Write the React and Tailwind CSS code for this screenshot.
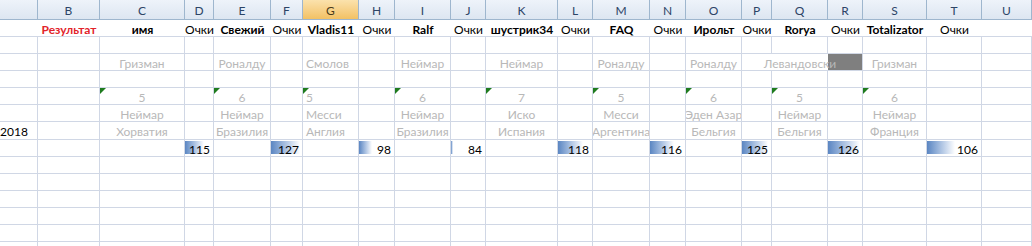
import React from 'react';

const letters = ['', 'B', 'C', 'D', 'E', 'F', 'G', 'H', 'I', 'J', 'K', 'L', 'M', 'N', 'O', 'P', 'Q', 'R', 'S', 'T', 'U'];

// one entry per participant: name column + "Очки" column
const players = [
    { name: 'имя', pick: 'Гризман', goals: '5', scorer: 'Неймар', team: 'Хорватия', pts: 115, bar: 19 },
    { name: 'Свежий', pick: 'Роналду', goals: '6', scorer: 'Неймар', team: 'Бразилия', pts: 127, bar: 29 },
    { name: 'Vladis11', pick: 'Смолов', goals: '5', scorer: 'Месси', team: 'Англия', pts: 98, bar: 13, left: true },
    { name: 'Ralf', pick: 'Неймар', goals: '6', scorer: 'Неймар', team: 'Бразилия', pts: 84, bar: 2 },
    { name: 'шустрик34', pick: 'Неймар', goals: '7', scorer: 'Иско', team: 'Испания', pts: 118, bar: 25 },
    { name: 'FAQ', pick: 'Роналду', goals: '5', scorer: 'Месси', team: 'Аргентина', pts: 116, bar: 24 },
    { name: 'Ирольт', pick: 'Роналду', goals: '6', scorer: 'Эден Азар', team: 'Бельгия', pts: 125, bar: 26 },
    { name: 'Rorya', pick: 'Левандовски', goals: '5', scorer: 'Неймар', team: 'Бельгия', pts: 126, bar: 32, overflow: true },
    { name: 'Totalizator', pick: 'Гризман', goals: '6', scorer: 'Неймар', team: 'Франция', pts: 106, bar: 28 },
];

const grid = 'border-r border-b border-[#d0d7e5]';
const gray = 'text-[#b8b8b8]';

const Cell = ({ className = '', children }) => (
    <div className={`relative flex items-center pt-[3px] overflow-hidden whitespace-nowrap ${className}`}>{children}</div>
);

const Triangle = () => (
    <span className="absolute left-0 top-0 w-0 h-0 border-t-[6px] border-r-[6px] border-t-[#1e7b1e] border-r-transparent" />
);

const App = () => {
    const rows = [];

    // column headers
    const header = letters.map((l, i) => (
        <Cell
            key={`h${i}`}
            className={`justify-center border-r border-b border-[#9eb6ce] text-[12px] ${l === 'G' ? 'bg-linear-to-b from-[#fbe2ac] to-[#f2c163] text-[#4a3a1a]' : 'bg-linear-to-b from-[#eef3fa] to-[#dde6f1] text-[#2c4466]'}`}
        >
            {l}
        </Cell>
    ));

    // row 1: titles
    const titles = [
        <Cell key="t0" className="border-b border-[#d0d7e5] bg-white" />,
        <Cell key="t1" className="justify-center border-b border-[#d0d7e5] bg-white font-bold text-[#e2232a]">Результат</Cell>,
    ];
    players.forEach((p, i) => {
        titles.push(
            <Cell key={`tn${i}`} className="justify-center border-b border-[#d0d7e5] bg-white font-bold text-black">{p.name}</Cell>
        );
        titles.push(
            <Cell key={`tp${i}`} className="justify-center border-b border-[#d0d7e5] bg-white text-black">Очки</Cell>
        );
    });
    titles.push(<Cell key="t20" className="border-b border-[#d0d7e5] bg-white" />);

    const blankRow = (key) => letters.map((_, i) => <Cell key={`${key}${i}`} className={grid} />);

    const dataRow = (key, field, opts = {}) => {
        const cells = [
            <Cell key={`${key}a`} className={grid}>{opts.first}</Cell>,
            <Cell key={`${key}b`} className={grid} />,
        ];
        players.forEach((p, i) => {
            if (field === 'pick' && p.overflow) {
                cells.push(
                    <Cell key={`${key}n${i}`} className={`justify-center overflow-visible border-b border-[#d0d7e5] ${gray}`}>
                        <span className="relative z-10">{p.pick}</span>
                    </Cell>
                );
                cells.push(<Cell key={`${key}p${i}`} className="border-r border-b border-[#d0d7e5] bg-[#7f7f7f]" />);
                return;
            }
            cells.push(
                <Cell key={`${key}n${i}`} className={`${grid} ${gray} ${p.left ? 'pl-[3px]' : 'justify-center'}`}>
                    {opts.tri && <Triangle />}
                    {p[field]}
                </Cell>
            );
            const prevOverflow = field === 'pick' && players[i + 1] && players[i + 1].overflow;
            cells.push(
                <Cell key={`${key}p${i}`} className={prevOverflow ? 'border-b border-[#d0d7e5]' : grid} />
            );
        });
        cells.push(<Cell key={`${key}u`} className={grid} />);
        return cells;
    };

    // row 8: points with data bars
    const points = [
        <Cell key="pa" className={grid} />,
        <Cell key="pb" className={grid} />,
    ];
    players.forEach((p, i) => {
        points.push(<Cell key={`pn${i}`} className={grid} />);
        points.push(
            <Cell key={`pp${i}`} className={`${grid} justify-end pr-[3px] text-black`}>
                <span
                    className="absolute left-0 top-[1px] h-[13px] bg-linear-to-r from-[#5b86c2] to-white"
                    style={{ width: p.bar }}
                />
                <span className="relative">{p.pts}</span>
            </Cell>
        );
    });
    points.push(<Cell key="pu" className={grid} />);

    rows.push(...header, ...titles, ...blankRow('r2'), ...dataRow('r3', 'pick'), ...blankRow('r4'));
    rows.push(...dataRow('r5', 'goals', { tri: true }), ...dataRow('r6', 'scorer'));
    rows.push(...dataRow('r7', 'team', { first: <span className="text-black">2018</span> }));
    rows.push(...points);
    for (let r = 9; r <= 15; r++) rows.push(...blankRow(`r${r}`));

    return (
        <div className="w-[1032px] h-[246px] overflow-hidden bg-white font-['Lato',sans-serif] text-[12px] leading-none">
            <div className="grid grid-cols-[38px_62px_85px_29px_57px_32px_56px_36px_56px_35px_72px_35px_57px_36px_56px_30px_56px_35px_64px_55px_50px] grid-rows-[20px_17px_17px_17px_17px_17px_17px_18px_17px_17px_17px_17px_17px_17px_17px]">
                {rows}
            </div>
        </div>
    );
};

export default App;
